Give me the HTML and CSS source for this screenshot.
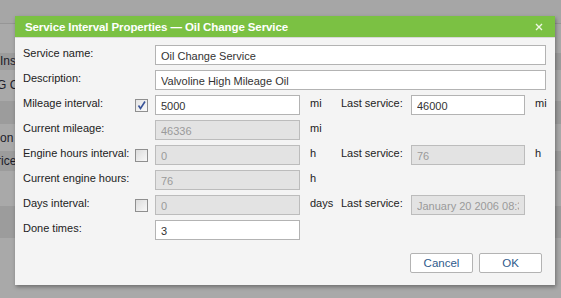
FILE: index.html
```html
<!DOCTYPE html>
<html lang="en">
<head>
    <meta charset="UTF-8">
    <title>Service Interval Properties</title>
    <link rel="stylesheet" href="styles.css">
</head>
<body>
    <div class="page">
        <div class="topbar"></div>
        <div class="row light h30"></div>
        <div class="row dark h17"><span class="cell">Insp</span></div>
        <div class="row light h32"><span class="cell shift">G C</span></div>
        <div class="row dark h23"></div>
        <div class="row light h27"><span class="cell">on</span></div>
        <div class="row dark h20"><span class="cell shift">rice</span></div>
        <div class="row light h35"></div>
        <div class="row dark h33"></div>
        <div class="row light h60"></div>
    </div>

    <div class="dialog">
        <div class="dialog-head">
            <span class="title">Service Interval Properties — Oil Change Service</span>
            <svg class="close" width="8" height="8" viewBox="0 0 8 8">
                <path d="M1 1L7 7M7 1L1 7" stroke="#eef7e4" stroke-width="1.4" fill="none"/>
            </svg>
        </div>
        <div class="dialog-body">
            <div class="form">
                <label class="lbl">Service name:</label>
                <input class="field wide" type="text" value="Oil Change Service">

                <label class="lbl">Description:</label>
                <input class="field wide" type="text" value="Valvoline High Mileage Oil">

                <label class="lbl">Mileage interval:</label>
                <span class="check on">
                    <svg width="11" height="11" viewBox="0 0 11 11"><path d="M2.5 5.5L4.5 8.5L9 1.5" stroke="#3a5499" stroke-width="1.6" fill="none"/></svg>
                </span>
                <input class="field" type="text" value="5000">
                <span class="unit">mi</span>
                <label class="lbl2">Last service:</label>
                <input class="field" type="text" value="46000">
                <span class="unit">mi</span>

                <label class="lbl">Current mileage:</label>
                <span></span>
                <input class="field" type="text" value="46336" disabled>
                <span class="unit">mi</span>
                <span></span><span></span><span></span>

                <label class="lbl">Engine hours interval:</label>
                <span class="check"></span>
                <input class="field" type="text" value="0" disabled>
                <span class="unit">h</span>
                <label class="lbl2">Last service:</label>
                <input class="field" type="text" value="76" disabled>
                <span class="unit">h</span>

                <label class="lbl">Current engine hours:</label>
                <span></span>
                <input class="field" type="text" value="76" disabled>
                <span class="unit">h</span>
                <span></span><span></span><span></span>

                <label class="lbl">Days interval:</label>
                <span class="check"></span>
                <input class="field" type="text" value="0" disabled>
                <span class="unit">days</span>
                <label class="lbl2">Last service:</label>
                <input class="field" type="text" value="January 20 2006 08:30" disabled>
                <span></span>

                <label class="lbl">Done times:</label>
                <span></span>
                <input class="field" type="text" value="3">
                <span></span><span></span><span></span><span></span>
            </div>
            <div class="buttons">
                <button class="btn">Cancel</button>
                <button class="btn">OK</button>
            </div>
        </div>
    </div>
</body>
</html>
```

FILE: styles.css
```css
body {
    margin: 0;
    font-family: "Liberation Sans", Arial, sans-serif;
    font-size: 11px;
    color: #222;
    background-color: #a8a8a8;
    overflow: hidden;
}

.page {
    height: 298px;
    display: flex;
    flex-direction: column;
}

.topbar {
    height: 23px;
    background-color: #a6a6a6;
    border-bottom: 1px solid #969696;
}

.row {
    display: flex;
    align-items: center;
    color: #1c1c2a;
    font-size: 12px;
    overflow: hidden;
    white-space: nowrap;
}

.row.light { background-color: #a9a9a9; }
.row.dark { background-color: #9c9c9c; }

.h17 { height: 17px; }
.h20 { height: 20px; }
.h23 { height: 23px; }
.h27 { height: 27px; }
.h30 { height: 29px; }
.h32 { height: 32px; }
.h33 { height: 33px; }
.h35 { height: 35px; }
.h60 { height: 60px; }

.cell {
    display: block;
    width: 15px;
    overflow: hidden;
}

.cell.shift {
    text-indent: -3px;
}

.dialog {
    position: absolute;
    left: 15px;
    top: 16px;
    width: 540px;
    height: 269px;
    background-color: #f4f4f4;
    box-shadow: 1px 2px 4px rgba(0, 0, 0, 0.35);
    display: flex;
    flex-direction: column;
}

.dialog-head {
    height: 22px;
    background-color: #7bc143;
    border-bottom: 1px solid #d8d8d8;
    display: flex;
    align-items: center;
    justify-content: space-between;
    padding: 0 12px 0 10px;
    box-sizing: border-box;
}

.title {
    color: #fff;
    font-weight: bold;
    font-size: 11.5px;
    letter-spacing: -0.1px;
}

.close {
    display: block;
}

.dialog-body {
    flex: 1;
    display: flex;
    flex-direction: column;
    padding: 7px 13px 12px 8px;
}

.form {
    display: grid;
    grid-template-columns: 112px 20px 145px 41px 70px 114px 21px;
    grid-auto-rows: 20px;
    row-gap: 5px;
}

.lbl, .lbl2 {
    font-size: 11px;
    padding-top: 1px;
    line-height: 14px;
    white-space: nowrap;
}

.unit {
    font-size: 11px;
    padding-left: 10px;
    padding-top: 1px;
    line-height: 14px;
}

.field {
    box-sizing: border-box;
    height: 20px;
    width: 100%;
    margin: 0;
    border: 1px solid #b3b3b3;
    background-color: #fff;
    font-family: inherit;
    font-size: 11px;
    color: #333;
    padding: 1px 5px 0;
    outline: none;
}

.field:disabled {
    background-color: #e3e3e3;
    color: #9a9a9a;
    border-color: #bcbcbc;
}

.field.wide {
    grid-column: 3 / 8;
}

.check {
    box-sizing: border-box;
    width: 13px;
    height: 13px;
    margin-top: 4px;
    border: 1px solid #8f8f8f;
    background: linear-gradient(135deg, #dcdcdc, #f8f8f8);
    display: flex;
    align-items: center;
    justify-content: center;
}

.check.on {
    background: linear-gradient(135deg, #e4e4e4, #fafafa);
}

.buttons {
    margin-top: auto;
    display: flex;
    justify-content: flex-end;
    gap: 6px;
}

.btn {
    width: 63px;
    height: 20px;
    background-color: #fff;
    border: 1px solid #b3b3b3;
    border-radius: 2px;
    color: #2f5b8c;
    font-family: inherit;
    font-size: 11.5px;
    padding: 0;
    cursor: pointer;
}
```
